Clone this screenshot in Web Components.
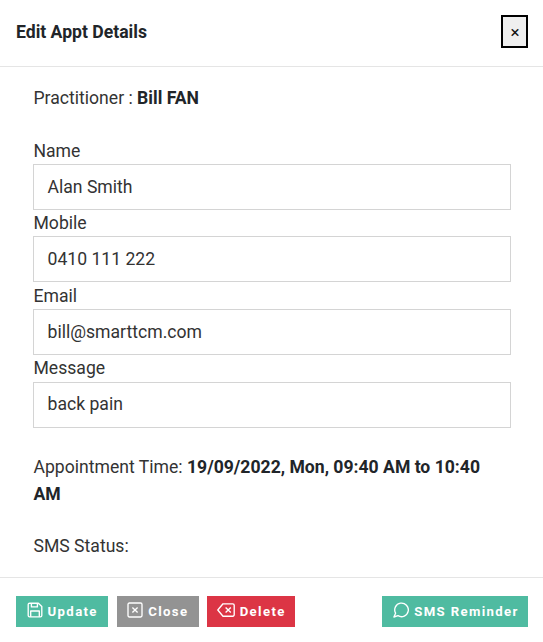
<!DOCTYPE html>
<html><head><meta charset="utf-8"><style>
html,body{margin:0;padding:0;background:#fff}
body{font-family:Roboto,"Liberation Sans",sans-serif;color:#212529}
</style></head><body>
<appt-modal>
<span slot="title">Edit Appt Details</span>
<appt-line style="--mt:18px;--mb:25.93px">Practitioner : <b>Bill FAN</b></appt-line>
<appt-field label="Name" value="Alan Smith"></appt-field>
<appt-field label="Mobile" value="0410 111 222"></appt-field>
<appt-field label="Email" value="bill@smarttcm.com"></appt-field>
<appt-field label="Message" value="back pain" style="--pb:1px"></appt-field>
<appt-line style="--mt:26.35px;--mb:0px">Appointment Time: <b>19/09/2022, Mon, 09:40 AM to 10:40 AM</b></appt-line>
<appt-line style="--mt:25.6px;--mb:0px">SMS Status:</appt-line>
<appt-btn slot="footer" color="#4fbba1" style="width:92.4px"><svg slot="icon" viewBox="0 0 16 16" fill="none" stroke="currentColor" stroke-width="1.35" stroke-linejoin="round"><path d="M1.2 2.6a1.4 1.4 0 0 1 1.4-1.4h8.8l3.4 3.4v8.8a1.4 1.4 0 0 1-1.4 1.4H2.6a1.4 1.4 0 0 1-1.4-1.4z"/><path d="M4.4 1.2v3.7h6V1.2"/><path d="M3.7 14.8V9h8.6v5.8"/></svg>Update</appt-btn>
<appt-btn slot="footer" color="#939393" style="width:82px"><svg slot="icon" viewBox="0 0 16 16" fill="none" stroke="currentColor" stroke-width="1.35"><rect x="1" y="1" width="14" height="14" rx="1.4"/><path d="M5.4 5.4l5.2 5.2M10.6 5.4l-5.2 5.2"/></svg>Close</appt-btn>
<appt-btn slot="footer" color="#dc3545" style="width:88px"><svg slot="icon" style="width:18px" viewBox="0 0 18 16" fill="none" stroke="currentColor" stroke-width="1.35" stroke-linejoin="round"><path d="M6 1.8h9.8A1.4 1.4 0 0 1 17.2 3.2v9.6a1.4 1.4 0 0 1-1.4 1.4H6L.8 8z"/><path d="M8.6 5.4l5.2 5.2M13.8 5.4l-5.2 5.2"/></svg>Delete</appt-btn>
<appt-btn slot="footer-end" color="#4fbba1" style="width:146px;padding-left:2px"><svg slot="icon" viewBox="0 0 16 16" fill="none" stroke="currentColor" stroke-width="1.35" stroke-linejoin="round"><path d="M2.6 11.2A6.8 6.8 0 1 1 5 13.7L.9 15z"/></svg>SMS Reminder</appt-btn>
</appt-modal>
<script>
customElements.define('appt-modal',class extends HTMLElement{constructor(){super();this.attachShadow({mode:'open'}).innerHTML=`<style>
:host{display:flex;flex-direction:column;width:543px;height:642px;box-sizing:border-box;overflow:hidden}
header{flex:none;box-sizing:border-box;border-bottom:1px solid #e5e5e5;display:flex;align-items:center;justify-content:space-between;padding:0 15px 3px 16px;height:67px}
.t{font-size:17.6px;font-weight:700;color:#212529;line-height:26px}
button{width:27px;height:33px;box-sizing:border-box;border:2px solid #000;background:#efefef;padding:1px 0 0 1px;font:400 17px Roboto,sans-serif;color:#111;display:flex;align-items:center;justify-content:center}
main{flex:1;padding:0 32px 0 33px;min-height:0}
footer{flex:none;height:65px;box-sizing:border-box;border-top:1px solid #e5e5e5;display:flex;align-items:flex-start;padding:18px 15px 0 16px;gap:8.4px}
.sp{flex:1}
::slotted(appt-btn){flex:none}
</style><header><div class="t"><slot name="title"></slot></div><button>×</button></header><main><slot></slot></main><footer><slot name="footer"></slot><div class="sp"></div><slot name="footer-end"></slot></footer>`}});
customElements.define('appt-line',class extends HTMLElement{constructor(){super();this.attachShadow({mode:'open'}).innerHTML=`<style>
:host{display:block;font-size:17.6px;line-height:26.67px;margin-top:var(--mt);margin-bottom:var(--mb);padding-left:.5px;color:#333}
::slotted(b){font-weight:700;color:#212529}
</style><slot></slot>`}});
customElements.define('appt-field',class extends HTMLElement{constructor(){super();const l=this.getAttribute('label'),v=this.getAttribute('value');this.attachShadow({mode:'open'}).innerHTML=`<style>
:host{display:block;font-size:17.6px;color:#333;margin-bottom:.35px}
label{display:block;line-height:26.67px;height:26.25px;padding-left:.5px}
div{height:46px;box-sizing:border-box;border:1px solid #d4d4d4;padding:0 13.5px var(--pb,0px);display:flex;align-items:center;color:#333}
</style><label>${l}</label><div>${v}</div>`}});
customElements.define('appt-btn',class extends HTMLElement{constructor(){super();const c=this.getAttribute('color');this.attachShadow({mode:'open'}).innerHTML=`<style>
:host{display:inline-flex;align-items:center;justify-content:center;gap:5px;height:31px;background:${c};color:#fff;font-size:13.2px;font-weight:700;letter-spacing:1.35px;box-sizing:border-box}
::slotted(svg){width:16px;height:16px;flex:none;margin-top:-3px}
</style><slot name="icon"></slot><slot></slot>`}});
</script>
</body></html>
